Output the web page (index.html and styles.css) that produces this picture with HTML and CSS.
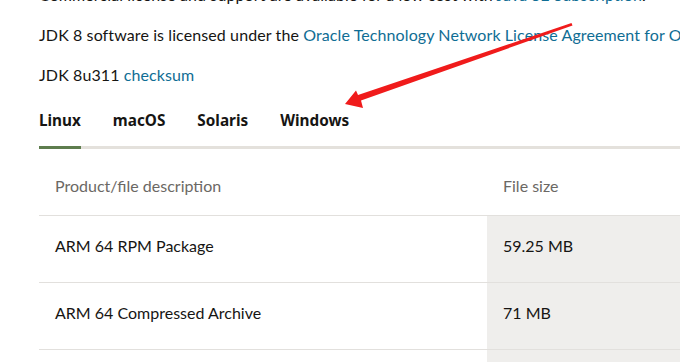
FILE: index.html
```html
<!DOCTYPE html>
<html>
<head>
<meta charset="utf-8">
<link rel="stylesheet" href="styles.css">
</head>
<body>
<div class="page">
  <p class="para">Commercial license and support are available for a low cost with <a class="link">Java SE Subscription</a>.</p>
  <p class="para">JDK 8 software is licensed under the <a class="link">Oracle Technology Network License Agreement for Oracle Java SE</a></p>
  <p class="para">JDK 8u311 <a class="link">checksum</a></p>
  <ul class="tabs">
    <li class="tab active">Linux</li>
    <li class="tab">macOS</li>
    <li class="tab">Solaris</li>
    <li class="tab">Windows</li>
  </ul>
  <div class="table">
    <div class="row head">
      <div class="cell desc">Product/file description</div>
      <div class="cell size">File size</div>
    </div>
    <div class="row">
      <div class="cell desc">ARM 64 RPM Package</div>
      <div class="cell size shade">59.25 MB</div>
    </div>
    <div class="row">
      <div class="cell desc">ARM 64 Compressed Archive</div>
      <div class="cell size shade">71 MB</div>
    </div>
    <div class="row">
      <div class="cell desc">ARM 64 Debian Package</div>
      <div class="cell size shade">60 MB</div>
    </div>
  </div>
</div>
<svg class="arrow" width="680" height="362" viewBox="0 0 680 362">
  <polygon fill="#f01b1b" points="345,104 356,90.5 358,95 571.5,23 572.5,25.5 361,100.5 363,108"/>
</svg>
</body>
</html>
```

FILE: styles.css
```css
html, body {
  margin: 0;
  padding: 0;
  background: #ffffff;
  overflow: hidden;
}
body {
  width: 680px;
  height: 362px;
  position: relative;
  font-family: Lato, "Liberation Sans", sans-serif;
  color: #161513;
}
.page {
  margin-top: -17px;
  padding-left: 39px;
  width: 900px;
}
.para {
  margin: 0 0 16px 0;
  font-size: 16px;
  line-height: 24px;
  letter-spacing: 0.1px;
  white-space: nowrap;
}
.link {
  color: #0f6d94;
  text-decoration: none;
}
.tabs {
  list-style: none;
  margin: 0;
  padding: 5px 0 0 0;
  display: flex;
  gap: 32px;
  border-bottom: 3px solid #e4e1dc;
  width: 641px;
}
.tab {
  font-family: "Noto Sans", "Open Sans", sans-serif;
  font-size: 15.3px;
  font-weight: 700;
  line-height: 24px;
  padding: 0 0 14px 0;
  margin-bottom: -3px;
  border-bottom: 3px solid transparent;
}
.tab.active {
  border-bottom-color: #5e7d4e;
}
.table {
  width: 641px;
}
.row {
  display: flex;
  border-bottom: 1px solid #e2e0dd;
}
.cell {
  font-size: 16px;
  line-height: 24px;
  padding: 18px 16px 24px 16px;
}
.head .cell {
  color: #6b6864;
  padding: 25px 16px 17px 16px;
}
.desc {
  width: 416px;
}
.size {
  flex: 1;
}
.shade {
  background: #efeeec;
}
.arrow {
  position: absolute;
  left: 0;
  top: 0;
  pointer-events: none;
}
```
